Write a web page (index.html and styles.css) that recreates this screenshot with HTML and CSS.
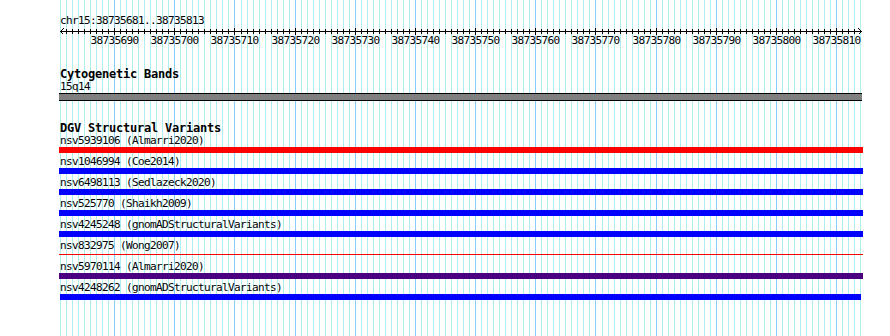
FILE: index.html
```html
<!DOCTYPE html>
<html lang="en">
<head>
    <meta charset="UTF-8">
    <meta name="viewport" content="width=device-width, initial-scale=1.0">
    <title>chr15:38735681..38735813</title>
    <link rel="stylesheet" href="styles.css">
</head>
<body>
    <svg id="grid" class="grid" width="890" height="336"></svg>

    <div class="panel">
        <div class="details">chr15:38735681..38735813</div>
        <svg id="ruler" class="ruler" width="804" height="24" viewBox="59 0 804 24"></svg>

        <div class="track cyto">
            <div class="track-title">Cytogenetic Bands</div>
            <div class="feature">
                <div class="label">15q14</div>
                <div class="bar band"></div>
            </div>
        </div>

        <div class="track dgv">
            <div class="track-title">DGV Structural Variants</div>
            <div class="feature">
                <div class="label">nsv5939106 (Almarri2020)</div>
                <div class="bar red"></div>
            </div>
            <div class="feature">
                <div class="label">nsv1046994 (Coe2014)</div>
                <div class="bar"></div>
            </div>
            <div class="feature">
                <div class="label">nsv6498113 (Sedlazeck2020)</div>
                <div class="bar"></div>
            </div>
            <div class="feature">
                <div class="label">nsv525770 (Shaikh2009)</div>
                <div class="bar"></div>
            </div>
            <div class="feature">
                <div class="label">nsv4245248 (gnomADStructuralVariants)</div>
                <div class="bar"></div>
            </div>
            <div class="feature">
                <div class="label">nsv832975 (Wong2007)</div>
                <div class="bar line"></div>
            </div>
            <div class="feature">
                <div class="label">nsv5970114 (Almarri2020)</div>
                <div class="bar indigo"></div>
            </div>
            <div class="feature">
                <div class="label">nsv4248262 (gnomADStructuralVariants)</div>
                <div class="bar short"></div>
            </div>
        </div>
    </div>

    <script src="ruler.js"></script>
</body>
</html>
```

FILE: styles.css
```css
html, body {
    margin: 0;
    background: #fff;
    overflow: hidden;
}
body {
    font-family: "DejaVu Sans Mono", "Liberation Mono", monospace;
    color: #000;
    width: 890px;
    height: 336px;
}
.grid {
    position: absolute;
    top: 0;
    left: 0;
}
.panel {
    position: relative;
    margin-left: 59px;
    width: 804px;
    padding-top: 15px;
}
.details,
.label {
    font-size: 11px;
    letter-spacing: -0.62px;
    line-height: 12px;
    height: 12px;
    padding-left: 1px;
    white-space: nowrap;
}
.ruler {
    display: block;
}
.ruler text {
    font-family: "DejaVu Sans Mono", "Liberation Mono", monospace;
    font-size: 11px;
    letter-spacing: -0.62px;
}
.track-title {
    font-size: 12px;
    font-weight: bold;
    letter-spacing: -0.22px;
    line-height: 12px;
    height: 12px;
    margin-bottom: 1px;
    padding-left: 1px;
}
.cyto {
    margin-top: 17px;
}
.dgv {
    margin-top: 18px;
}
.feature {
    padding-bottom: 3px;
}
.bar {
    height: 6px;
    background: #0000ff;
}
.bar.red {
    background: #ff0000;
}
.bar.indigo {
    background: #4b0082;
}
.bar.line {
    height: 1px;
    margin: 2px 0 3px;
    background: #ff0000;
}
.bar.band {
    width: 803px;
    background: #808080;
    border-top: 1px solid #000;
    border-bottom: 1px solid #000;
}
.bar.short {
    margin-left: 1px;
    width: 801px;
}
```

FILE: ruler.js
```js
// one grid line and one ruler tick per base
var START = 38735681;
var END = 38735813;
var LEFT = 60;
var PX_PER_BP = 6.0167;
var SVGNS = 'http://www.w3.org/2000/svg';

function xFor(i) {
    return Math.round(LEFT + i * PX_PER_BP);
}

function add(parent, tag, attrs, text) {
    var el = document.createElementNS(SVGNS, tag);
    for (var k in attrs) el.setAttribute(k, attrs[k]);
    if (text) el.textContent = text;
    parent.appendChild(el);
    return el;
}

var grid = document.getElementById('grid');
var ruler = document.getElementById('ruler');
var bases = END - START + 1;

for (var i = 0; i <= bases; i++) {
    var major = (START + i) % 10 === 0;
    add(grid, 'rect', {
        x: xFor(i), y: 0, width: 1, height: 336,
        fill: major ? '#87cefa' : '#afeeee'
    });
}

// axis with arrows at both ends
add(ruler, 'rect', { x: 60, y: 4, width: 802, height: 1, fill: '#000' });
add(ruler, 'polyline', {
    points: '63.5,1.5 60.5,4.5 63.5,7.5',
    fill: 'none', stroke: '#000', 'shape-rendering': 'crispEdges'
});
add(ruler, 'polyline', {
    points: '858.5,1.5 861.5,4.5 858.5,7.5',
    fill: 'none', stroke: '#000', 'shape-rendering': 'crispEdges'
});

for (var j = 1; j < bases; j++) {
    var pos = START + j;
    var x = xFor(j);
    if (pos % 10 === 0) {
        add(ruler, 'rect', { x: x, y: 1, width: 1, height: 7, fill: '#000' });
        add(ruler, 'text', { x: x + 0.5, y: 17, 'text-anchor': 'middle' }, String(pos));
    } else {
        add(ruler, 'rect', { x: x, y: 2, width: 1, height: 5, fill: '#000' });
    }
}
```
